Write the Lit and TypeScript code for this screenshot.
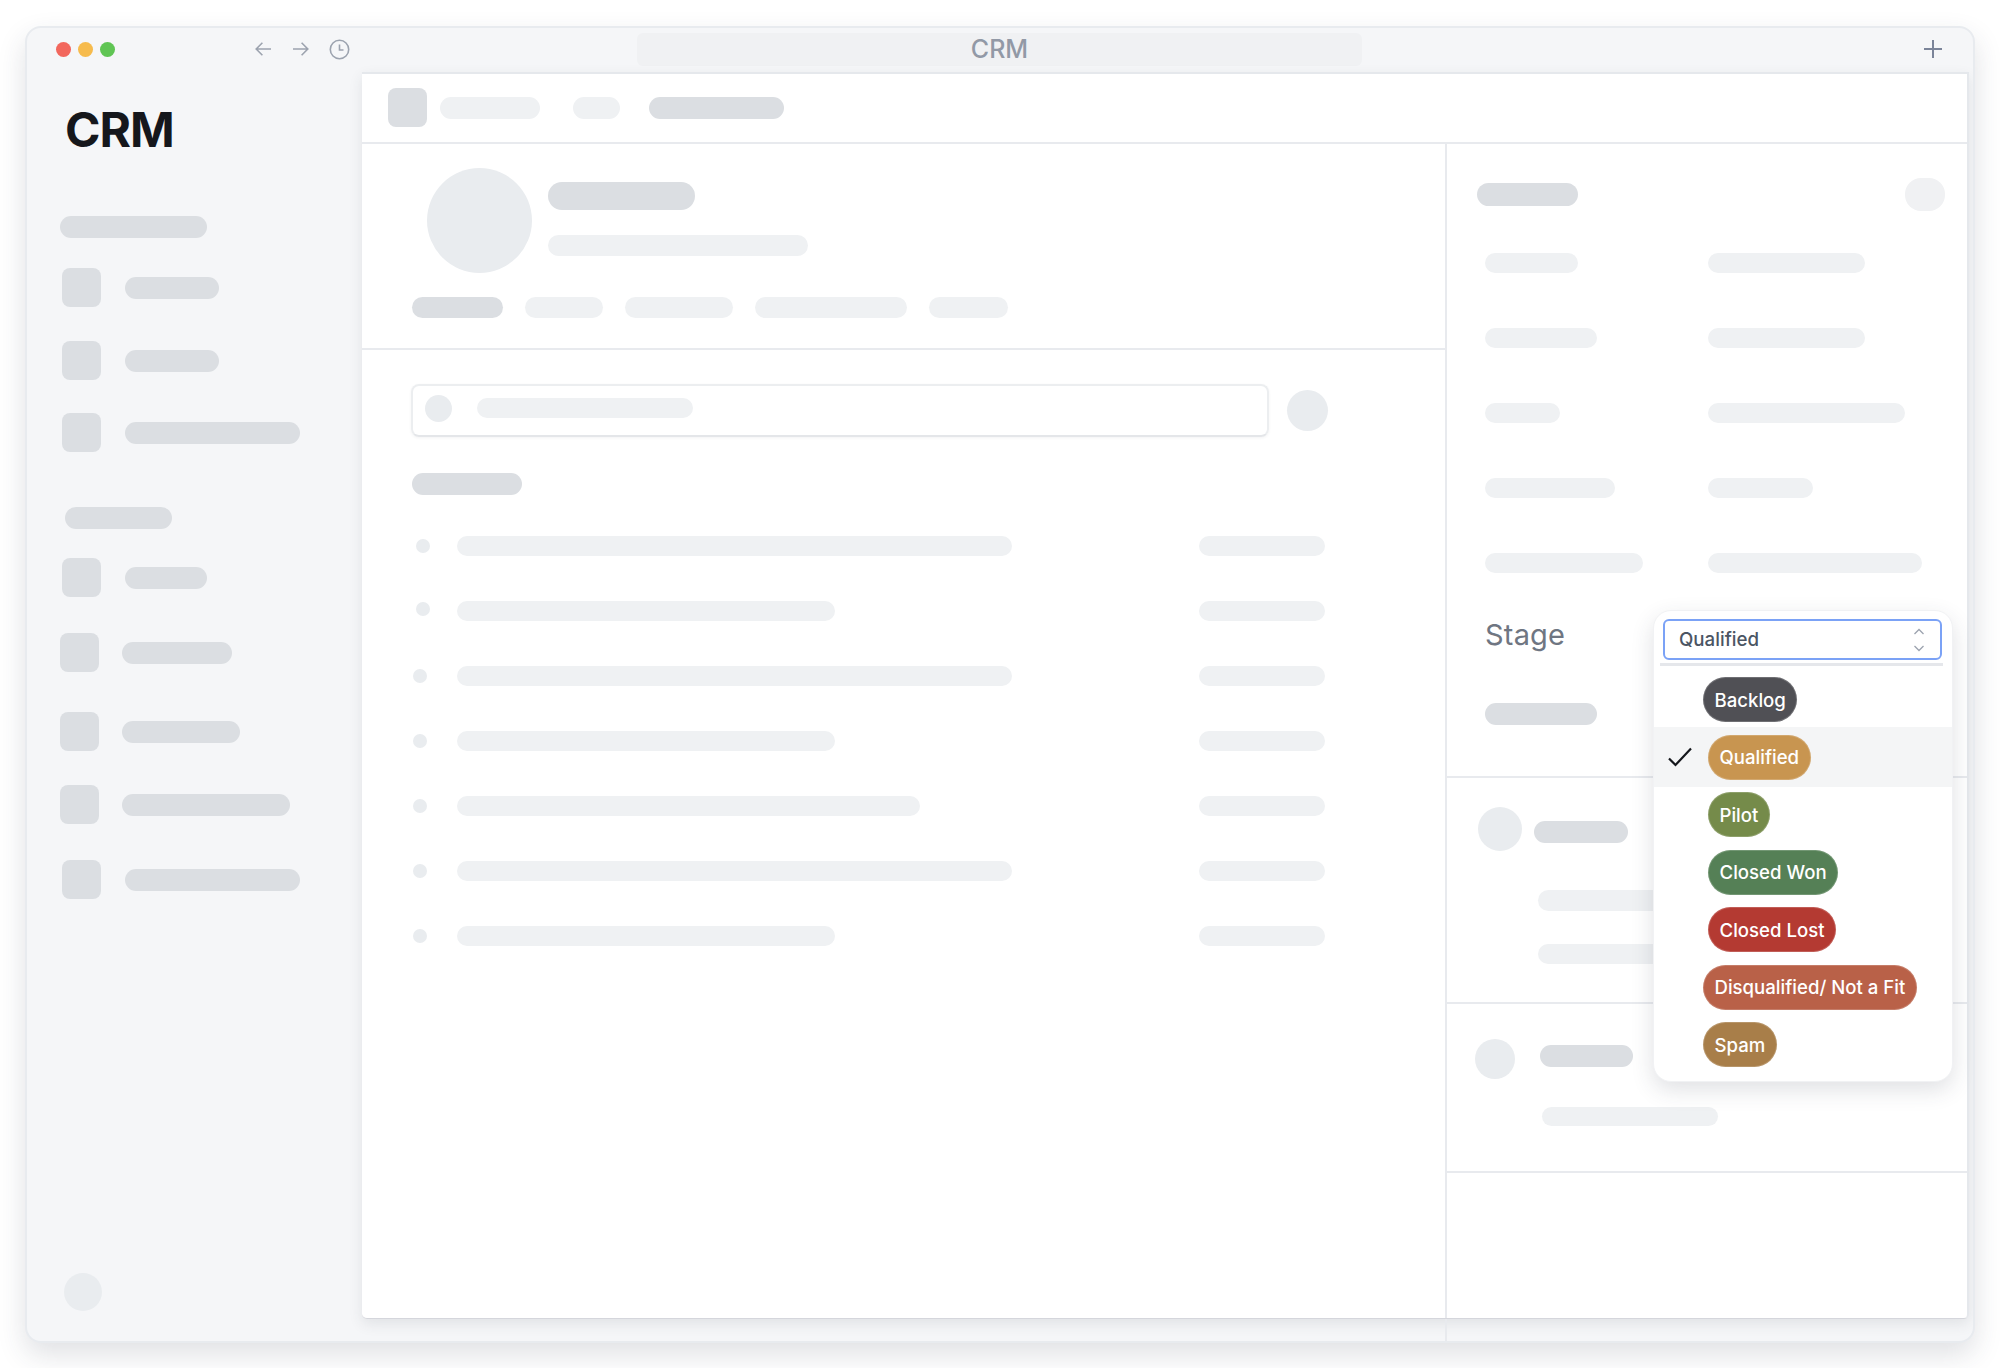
import { LitElement, html, css } from "lit";
import { customElement } from "lit/decorators.js";

const bar = (w: number, h: number, tone = "") =>
  html`<div class="bar ${tone}" style="width:${w}px;height:${h}px"></div>`;

const navA = [
  { off: 2, gap: 24, w: 94, mt: 30 },
  { off: 2, gap: 24, w: 94, mt: 34 },
  { off: 2, gap: 24, w: 175, mt: 33 },
];
const navB = [
  { off: 2, gap: 24, w: 82, mt: 29 },
  { off: 0, gap: 23, w: 110, mt: 36 },
  { off: 0, gap: 23, w: 118, mt: 40 },
  { off: 0, gap: 23, w: 168, mt: 34 },
  { off: 2, gap: 24, w: 175, mt: 36 },
];
const rowsList = [
  { w: 555, dx: 0, up: 0 },
  { w: 378, dx: 0, up: 4 },
  { w: 555, dx: -3, up: 0 },
  { w: 378, dx: -3, up: 0 },
  { w: 463, dx: -3, up: 0 },
  { w: 555, dx: -3, up: 0 },
  { w: 378, dx: -3, up: 0 },
];
const fields = [
  [93, 157],
  [112, 157],
  [75, 197],
  [130, 105],
  [158, 214],
];
const options = [
  { t: "Backlog", c: "#505055", out: true },
  { t: "Qualified", c: "#c89550", sel: true },
  { t: "Pilot", c: "#758b4a" },
  { t: "Closed Won", c: "#558056" },
  { t: "Closed Lost", c: "#b43a32" },
  { t: "Disqualified/ Not a Fit", c: "#b96148", out: true },
  { t: "Spam", c: "#a87e49", out: true },
];

@customElement("app-root")
export class AppRoot extends LitElement {
  static styles = css`
    :host {
      display: block;
      width: 2000px;
      height: 1368px;
      box-sizing: border-box;
      padding: 26px 25px 25px;
      background: #fff;
      font-family: Inter, "Liberation Sans", sans-serif;
      overflow: hidden;
    }
    * { box-sizing: border-box; }
    .win {
      width: 1950px;
      height: 1317px;
      border: 2px solid #e8ebef;
      border-radius: 16px;
      background: #f5f6f8;
      box-shadow: 0 12px 28px rgba(50, 56, 72, 0.15);
      display: flex;
      flex-direction: column;
      overflow: hidden;
    }
    .bar { border-radius: 999px; background: #eff1f3; flex: none; }
    .bar.dark { background: #dbdee2; }
    .titlebar {
      height: 44px;
      flex: none;
      display: flex;
      align-items: center;
      padding: 0 31px 2px 29px;
    }
    .lights { display: flex; gap: 7px; }
    .light { width: 15px; height: 15px; border-radius: 50%; }
    .red { background: #f2675d; }
    .yellow { background: #f6bb4d; }
    .green { background: #60c554; }
    .nav { display: flex; align-items: center; margin-left: 140px; gap: 20px; }
    .nav svg { display: block; }
    .url {
      margin-left: 287px;
      width: 725px;
      height: 33px;
      border-radius: 6px;
      background: #f0f1f3;
      color: #9299a6;
      font-size: 25px;
      font-weight: 500;
      display: flex;
      align-items: center;
      justify-content: center;
    }
    .plus { margin-left: auto; display: block; }
    .body { flex: 1; display: flex; min-height: 0; }
    .sidebar {
      width: 335px;
      flex: none;
      padding-left: 33px;
      display: flex;
      flex-direction: column;
    }
    .logo {
      font-size: 48px;
      font-weight: 700;
      line-height: 60px;
      color: #15171c;
      margin: 28px 0 0 5px;
      letter-spacing: -1px;
    }
    .sec-a { margin-top: 56px; }
    .nav-row { display: flex; align-items: center; }
    .square { width: 39px; height: 39px; border-radius: 8px; background: #dbdee2; flex: none; }
    .sec-b { margin: 55px 0 0 5px; }
    .foot {
      margin: auto 0 30px 4px;
      width: 38px;
      height: 38px;
      border-radius: 50%;
      background: #e9ecef;
    }
    .mainwrap { width: 1607px; flex: none; display: flex; flex-direction: column; }
    .main {
      height: 1247px;
      flex: none;
      background: #fff;
      border-top: 2px solid #e5e8ec;
      border-right: 2px solid #e5e8ec;
      border-bottom: 1px solid #d5d6dc;
      border-radius: 0 0 5px 5px;
      box-shadow: 0 5px 14px rgba(50, 56, 72, 0.1);
      display: flex;
      flex-direction: column;
    }
    .strip {
      flex: 1;
      margin-left: 1083px;
      border-left: 2px solid #e8eaee;
    }
    .topbar {
      height: 70px;
      flex: none;
      border-bottom: 2px solid #e8eaee;
      padding: 0 0 1px 26px;
      display: flex;
      align-items: center;
    }
    .sp13 { width: 13px; }
    .sp33 { width: 33px; }
    .sp29 { width: 29px; }
    .columns { flex: 1; display: flex; min-height: 0; }
    .left { width: 1083px; flex: none; }
    .right {
      flex: 1;
      border-left: 2px solid #e8eaee;
      position: relative;
      display: flex;
      flex-direction: column;
    }
    .profile {
      height: 206px;
      border-bottom: 2px solid #e8eaee;
      padding: 24px 0 0 50px;
    }
    .head { display: flex; gap: 16px; padding-left: 15px; }
    .avatar { width: 105px; height: 105px; border-radius: 50%; background: #e9ecef; flex: none; }
    .headtext { display: flex; flex-direction: column; padding-top: 14px; gap: 25px; }
    .tabs { display: flex; gap: 22px; margin-top: 24px; }
    .work { padding: 34px 120px 0 49px; }
    .searchrow { display: flex; align-items: center; gap: 18px; }
    .search {
      width: 858px;
      height: 53px;
      flex: none;
      border: 2px solid #eceef0;
      border-bottom-color: #e4e6e9;
      border-radius: 8px;
      box-shadow: 0 1px 3px rgba(50, 56, 72, 0.06);
      padding: 9px 0 0 12px;
      display: flex;
      align-items: flex-start;
      gap: 25px;
    }
    .search .circle { width: 27px; height: 27px; border-radius: 50%; background: #e9ecef; flex: none; }
    .search .bar { margin-top: 3px; }
    .rc { width: 41px; height: 41px; border-radius: 50%; background: #e9ecef; flex: none; }
    .hd { margin: 36px 0 18px 1px; }
    .lrow { height: 65px; display: flex; align-items: center; padding-left: 5px; }
    .dot { width: 14px; height: 14px; border-radius: 50%; background: #e9ecef; flex: none; }
    .dotcell { width: 41px; flex: none; }
    .lrow .end { margin-left: auto; }
    .rhead {
      display: flex;
      align-items: center;
      justify-content: space-between;
      padding: 34px 22px 0 30px;
      height: 67px;
      margin-bottom: 14px;
    }
    .pillsk { width: 40px; height: 33px; border-radius: 16px; background: #f0f1f3; }
    .frow { height: 75px; display: flex; align-items: center; padding-left: 38px; }
    .flabel { width: 223px; flex: none; }
    .stage {
      height: 69px;
      padding-left: 38px;
      display: flex;
      align-items: center;
      font-size: 29px;
      color: #6f7682;
      letter-spacing: 0.2px;
    }
    .stagebar { margin: 34px 0 51px 38px; }
    .sect2 { height: 226px; border-top: 2px solid #e8eaee; padding: 29px 0 0 31px; }
    .who { display: flex; align-items: center; gap: 12px; }
    .av2 { width: 44px; height: 44px; border-radius: 50%; background: #e9ecef; flex: none; }
    .who2 { margin-top: 6px; }
    .l1 { margin: 39px 0 0 60px; }
    .l2 { margin: 33px 0 0 60px; }
    .sect3 { height: 171px; border-top: 2px solid #e8eaee; border-bottom: 2px solid #e8eaee; padding: 35px 0 0 28px; }
    .sect3 .who { gap: 25px; }
    .av3 { width: 40px; height: 40px; border-radius: 50%; background: #e9ecef; flex: none; }
    .who3 { margin-bottom: 6px; }
    .l3 { margin: 28px 0 0 67px; }
    .drop {
      position: absolute;
      left: 206px;
      top: 466px;
      width: 300px;
      height: 472px;
      background: #fff;
      border-radius: 18px;
      border: 1px solid #f1f2f4;
      box-shadow: 0 8px 22px rgba(50, 56, 72, 0.15);
      padding-top: 8px;
    }
    .input {
      margin: 0 10px 0 9px;
      height: 41px;
      border: 2px solid #7ba2f6;
      border-radius: 6px;
      display: flex;
      align-items: center;
      justify-content: space-between;
      padding: 0 14px 0 14px;
      font-size: 18.7px;
      font-weight: 500;
      color: #4b5563;
    }
    .rule { height: 3px; margin: 3px 9px 5px 6px; background: #e5e7eb; }
    .opt { height: 57.5px; display: flex; align-items: center; padding-left: 54px; }
    .opt.out { padding-left: 49px; }
    .opt.sel {
      height: 60px;
      margin: -1.25px 0;
      background: #f4f5f6;
      padding-left: 14px;
      gap: 16px;
    }
    .pill {
      height: 45px;
      border-radius: 23px;
      padding: 0 11.5px;
      display: flex;
      align-items: center;
      color: #fff;
      font-size: 18.6px;
      font-weight: 500;
      white-space: nowrap;
      box-shadow: inset 0 0 0 1px rgba(255, 255, 255, 0.18);
    }
    .check { display: block; flex: none; }
  `;

  render() {
    return html`
      <div class="win">
        <div class="titlebar">
          <div class="lights">
            <div class="light red"></div>
            <div class="light yellow"></div>
            <div class="light green"></div>
          </div>
          <div class="nav">
            <svg width="18" height="14" viewBox="0 0 18 14" fill="none" stroke="#9ca3af" stroke-width="1.6">
              <path d="M16 7H1.2M7.4 .8 1.2 7l6.2 6.2" />
            </svg>
            <svg width="16" height="14" viewBox="0 0 16 14" fill="none" stroke="#9ca3af" stroke-width="1.6">
              <path d="M0 7h14.8M8.6 .8 14.8 7l-6.2 6.2" />
            </svg>
            <svg width="21" height="21" viewBox="0 0 21 21" fill="none" stroke="#9ca3af" stroke-width="1.6">
              <circle cx="10.5" cy="10.5" r="9.2" />
              <path d="M10.5 5.5v5.5h4" />
            </svg>
          </div>
          <div class="url">CRM</div>
          <svg class="plus" width="18" height="18" viewBox="0 0 18 18" stroke="#7b8499" stroke-width="2">
            <path d="M9 0v18M0 9h18" />
          </svg>
        </div>
        <div class="body">
          <div class="sidebar">
            <div class="logo">CRM</div>
            <div class="sec-a">${bar(147, 22, "dark")}</div>
            ${navA.map(
              (n) => html`<div class="nav-row" style="margin-top:${n.mt}px;margin-left:${n.off}px;gap:${n.gap}px">
                <div class="square"></div>
                ${bar(n.w, 22, "dark")}
              </div>`
            )}
            <div class="sec-b">${bar(107, 22, "dark")}</div>
            ${navB.map(
              (n) => html`<div class="nav-row" style="margin-top:${n.mt}px;margin-left:${n.off}px;gap:${n.gap}px">
                <div class="square"></div>
                ${bar(n.w, 22, "dark")}
              </div>`
            )}
            <div class="foot"></div>
          </div>
          <div class="mainwrap">
            <div class="main">
              <div class="topbar">
                <div class="square"></div>
                <div class="sp13"></div>
                ${bar(100, 22)}
                <div class="sp33"></div>
                ${bar(47, 22)}
                <div class="sp29"></div>
                ${bar(135, 22, "dark")}
              </div>
              <div class="columns">
                <div class="left">
                  <div class="profile">
                    <div class="head">
                      <div class="avatar"></div>
                      <div class="headtext">
                        ${bar(147, 28, "dark")} ${bar(260, 21)}
                      </div>
                    </div>
                    <div class="tabs">
                      ${bar(91, 21, "dark")} ${bar(78, 21)} ${bar(108, 21)} ${bar(152, 21)} ${bar(79, 21)}
                    </div>
                  </div>
                  <div class="work">
                    <div class="searchrow">
                      <div class="search">
                        <div class="circle"></div>
                        ${bar(216, 20)}
                      </div>
                      <div class="rc"></div>
                    </div>
                    <div class="hd">${bar(110, 22, "dark")}</div>
                    ${rowsList.map(
                      (r) => html`<div class="lrow">
                        <div class="dotcell">
                          <div class="dot" style="margin-left:${r.dx}px;margin-bottom:${r.up}px"></div>
                        </div>
                        ${bar(r.w, 20)}
                        <div class="end">${bar(126, 20)}</div>
                      </div>`
                    )}
                  </div>
                </div>
                <div class="right">
                  <div class="rhead">
                    ${bar(101, 23, "dark")}
                    <div class="pillsk"></div>
                  </div>
                  ${fields.map(
                    ([a, b]) => html`<div class="frow">
                      <div class="flabel">${bar(a, 20)}</div>
                      ${bar(b, 20)}
                    </div>`
                  )}
                  <div class="stage">Stage</div>
                  <div class="stagebar">${bar(112, 22, "dark")}</div>
                  <div class="sect2">
                    <div class="who"><div class="av2"></div><div class="who2">${bar(94, 22, "dark")}</div></div>
                    <div class="l1">${bar(200, 21)}</div>
                    <div class="l2">${bar(200, 20)}</div>
                  </div>
                  <div class="sect3">
                    <div class="who"><div class="av3"></div><div class="who3">${bar(93, 22, "dark")}</div></div>
                    <div class="l3">${bar(176, 19)}</div>
                  </div>
                  <div class="drop">
                    <div class="input">
                      <span>Qualified</span>
                      <svg width="14" height="26" viewBox="0 0 14 26" fill="none" stroke="#9ca3af" stroke-width="1.3">
                        <path d="M2.5 7 7 2.5 11.5 7M2.5 19 7 23.5 11.5 19" />
                      </svg>
                    </div>
                    <div class="rule"></div>
                    ${options.map(
                      (o) => html`<div class="opt ${o.sel ? "sel" : o.out ? "out" : ""}">
                        ${o.sel
                          ? html`<svg class="check" width="24" height="20" viewBox="0 0 24 20" fill="none" stroke="#15171c" stroke-width="2.2">
                              <path d="M1 11.5 7.5 18 23 1.5" />
                            </svg>`
                          : ""}
                        <span class="pill" style="background:${o.c}">${o.t}</span>
                      </div>`
                    )}
                  </div>
                </div>
              </div>
            </div>
            <div class="strip"></div>
          </div>
        </div>
      </div>
    `;
  }
}
